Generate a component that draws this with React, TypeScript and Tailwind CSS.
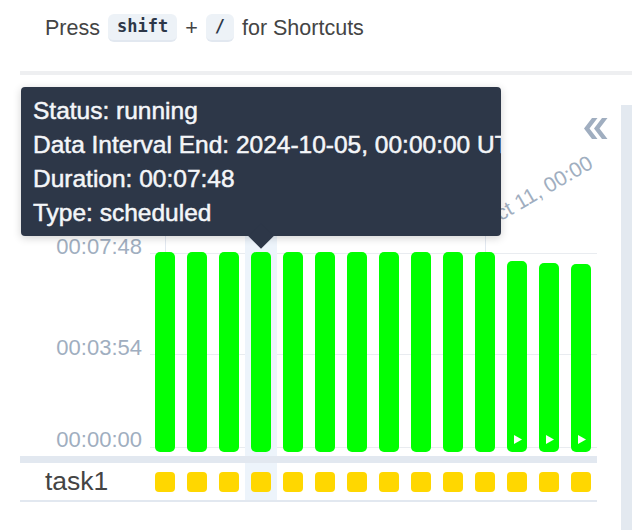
import React from 'react';

const BARS = [200, 200, 200, 200, 200, 200, 200, 200, 200, 200, 200, 191, 189, 188];
const HOVER = 3;

const Kbd: React.FC<{ children: React.ReactNode }> = ({ children }) => (
  <span className="inline-flex h-[28px] items-center rounded-[6px] border-b-[2px] border-[#e2e8f0] bg-[#edf2f7] px-[9px] font-['DejaVu_Sans_Mono',monospace] text-[17px] font-bold text-[#2d3748]">
    {children}
  </span>
);

const DoubleChevron = () => (
  <svg width="24" height="21" viewBox="0 0 24 21" fill="#a0aec0">
    <polygon points="0,10.5 8,0 13.5,0 5.5,10.5 13.5,21 8,21" />
    <polygon points="10,10.5 18,0 23.5,0 15.5,10.5 23.5,21 18,21" />
  </svg>
);

const App: React.FC = () => {
  return (
    <div className="relative h-[530px] w-[632px] overflow-hidden bg-white font-['Liberation_Sans',Arial,sans-serif]">
      {/* shortcut hint */}
      <div className="flex h-[71px] items-start gap-[8px] pl-[45px] pt-[14px] text-[21.5px] text-[#444]">
        <span className="leading-[28px]">Press</span>
        <Kbd>shift</Kbd>
        <span className="leading-[28px]">+</span>
        <Kbd>/</Kbd>
        <span className="leading-[28px]">for Shortcuts</span>
      </div>
      <div className="ml-[20px] h-[4px] bg-[#eeeff1]" />

      <div className="flex">
        {/* grid */}
        <div className="ml-[20px] w-[577px] shrink-0">
          <div className="relative flex h-[381px]">
            {/* y axis */}
            <div className="relative w-[129px] shrink-0 text-[22px] leading-[24px] text-[#a0aec0]">
              <span className="absolute right-[7px] top-[160px]">00:07:48</span>
              <span className="absolute right-[7px] top-[261px]">00:03:54</span>
              <span className="absolute right-[7px] top-[353px]">00:00:00</span>
            </div>

            <div className="relative w-[448px]">
              {/* chart lines */}
              <div className="absolute left-[1px] right-0 top-[178px] h-[1px] bg-[#e9ecf0]" />
              <div className="absolute left-[1px] right-0 top-[279px] h-[1px] bg-[#e9ecf0]" />
              <div className="absolute left-[1px] right-0 top-[372px] h-[1px] bg-[#e9ecf0]" />
              <div className="absolute left-[16px] top-[150px] h-[227px] w-[1px] bg-[#e2e8f0]" />
              <div className="absolute left-[336px] top-[150px] h-[227px] w-[1px] bg-[#e2e8f0]" />
              <span className="absolute left-[339px] top-[136px] origin-bottom-left -rotate-[30deg] whitespace-nowrap text-[21px] leading-[21px] text-[#a0aec0]">
                Oct 11, 00:00
              </span>

              <div className="relative flex h-full pt-[30px]">
                {BARS.map((h, i) => (
                  <div
                    key={i}
                    className={`flex w-[32px] shrink-0 items-end justify-center pb-[4px] ${i === HOVER ? 'bg-[#edf4fb]' : ''}`}
                  >
                    <div
                      className="flex w-[20px] items-end justify-center rounded-[5px] bg-[#00ff00] pb-[8px]"
                      style={{ height: h }}
                    >
                      {i > 10 && (
                        <svg width="9" height="9" viewBox="0 0 9 9">
                          <polygon points="1,0 9,4.5 1,9" fill="#ffffff" />
                        </svg>
                      )}
                    </div>
                  </div>
                ))}
              </div>
            </div>
          </div>

          <div className="h-[7px] bg-[#e2e8f0]" />

          {/* task row */}
          <div className="flex h-[37px]">
            <div className="flex w-[129px] shrink-0 items-center pl-[25px] text-[26.5px] text-[#444]">task1</div>
            <div className="flex">
              {BARS.map((_, i) => (
                <div
                  key={i}
                  className={`flex w-[32px] shrink-0 items-center justify-center ${i === HOVER ? 'bg-[#edf4fb]' : ''}`}
                >
                  <div className="h-[20px] w-[20px] rounded-[4px] bg-[#ffd700]" />
                </div>
              ))}
            </div>
          </div>
          <div className="h-[2px] bg-[#e2e8f0]" />
        </div>

        <div className="w-[24px] shrink-0" />
        <div className="mt-[30px] h-[425px] flex-1 bg-[#e3e9f0]" />
      </div>

      {/* collapse button */}
      <button className="absolute left-[584px] top-[118px]">
        <DoubleChevron />
      </button>

      {/* tooltip */}
      <div className="absolute left-[21px] top-[87px] h-[149px] w-[480px] rounded-[4px] bg-[#2d3748] shadow-[0_2px_8px_rgba(0,0,0,0.18)]">
        <div className="absolute left-[231px] top-[140px] h-[18px] w-[18px] rotate-45 bg-[#2d3748]" />
        <div className="relative h-full overflow-hidden whitespace-nowrap pl-[12px] pt-[7px] text-[24.5px] leading-[34px] text-[#f4f6f9] [-webkit-text-stroke:0.5px_#f4f6f9]">
          <div>Status: running</div>
          <div>Data Interval End: 2024-10-05, 00:00:00 UTC</div>
          <div>Duration: 00:07:48</div>
          <div>Type: scheduled</div>
        </div>
      </div>
    </div>
  );
};

export default App;
